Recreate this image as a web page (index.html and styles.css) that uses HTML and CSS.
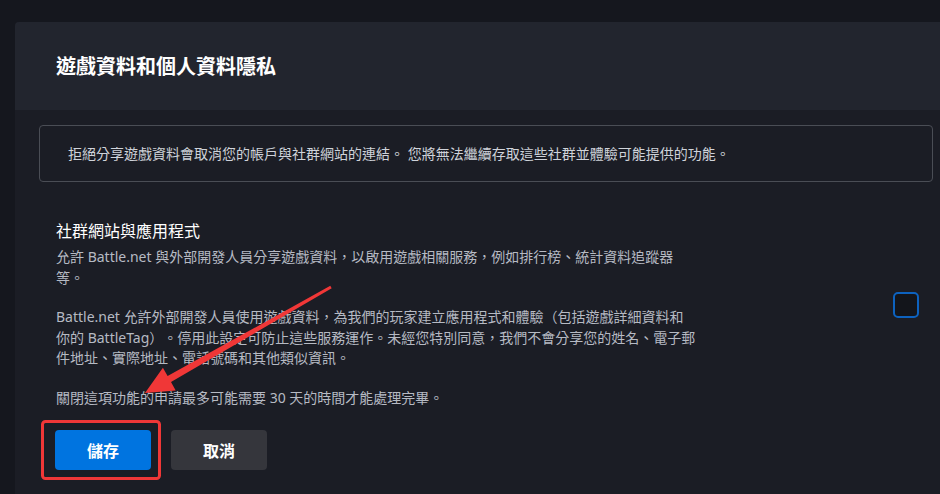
FILE: index.html
```html
<!DOCTYPE html>
<html lang="zh-Hant">
<head>
<meta charset="utf-8">
<title>遊戲資料和個人資料隱私</title>
<link rel="stylesheet" href="styles.css">
</head>
<body>
<div class="page">
  <section class="panel">
    <header class="panel-head">
      <h1 class="panel-title">遊戲資料和個人資料隱私</h1>
    </header>
    <div class="panel-body">
      <div class="notice">拒絕分享遊戲資料會取消您的帳戶與社群網站的連結。 您將無法繼續存取這些社群並體驗可能提供的功能。</div>
      <div class="setting">
        <div class="setting-text">
          <h2 class="setting-title">社群網站與應用程式</h2>
          <p class="para">允許 Battle.net 與外部開發人員分享遊戲資料，以啟用遊戲相關服務，例如排行榜、統計資料追蹤器等。</p>
          <p class="para">Battle.net 允許外部開發人員使用遊戲資料，為我們的玩家建立應用程式和體驗（包括遊戲詳細資料和你的 BattleTag）。停用此設定可防止這些服務運作。未經您特別同意，我們不會分享您的姓名、電子郵件地址、實際地址、電話號碼和其他類似資訊。</p>
          <p class="para">關閉這項功能的申請最多可能需要 30 天的時間才能處理完畢。</p>
        </div>
        <label class="check"><input type="checkbox" class="check-input"><span class="check-box"></span></label>
      </div>
      <div class="actions">
        <button class="btn btn-primary">儲存</button>
        <button class="btn btn-secondary">取消</button>
      </div>
    </div>
  </section>
  <svg class="annotation" width="940" height="494" viewBox="0 0 940 494">
    <polygon points="330.3,285.8 167.6,376.1 162.9,367.8 145,393 175.7,390.4 171,382.1 331.7,288.2" fill="#f03737"/>
    <rect x="42.5" y="421.5" width="117" height="57" rx="3" fill="none" stroke="#f03737" stroke-width="3"/>
  </svg>
</div>
</body>
</html>
```

FILE: styles.css
```css
* { box-sizing: border-box; }
html, body { margin: 0; padding: 0; }
body {
  background: #15171e;
  font-family: "Noto Sans", "Noto Sans CJK TC", sans-serif;
  color: #c9ccd3;
  overflow: hidden;
  width: 940px;
  height: 494px;
  text-spacing-trim: space-all;
}
.page {
  position: relative;
  padding: 22px 0 0 15px;
  height: 494px;
}
.panel {
  background: #1b1d25;
  border-radius: 4px 0 0 0;
  height: 100%;
}
.panel-head {
  background: #22252e;
  height: 88px;
  display: flex;
  align-items: center;
  padding-left: 41px;
  border-radius: 4px 0 0 0;
}
.panel-title {
  margin: 0;
  font-size: 20px;
  font-weight: 700;
  color: #ffffff;
  padding-bottom: 1px;
}
.panel-body {
  padding: 15px 7px 0 24px;
}
.notice {
  border: 1px solid #4a4d55;
  border-radius: 4px;
  height: 57px;
  display: flex;
  align-items: center;
  padding: 0 28px 1px;
  font-size: 14px;
  color: #cfd3da;
}
.setting {
  display: flex;
  align-items: center;
  justify-content: space-between;
  padding: 37px 14px 0 17px;
}
.setting-text {
  width: 640px;
}
.setting-title {
  margin: 0 0 4px;
  font-size: 16px;
  font-weight: 400;
  color: #ffffff;
  line-height: 24px;
}
.para {
  margin: 0 0 19px;
  font-size: 14px;
  line-height: 20.5px;
  color: #b6bac3;
}
.para:last-child { margin-bottom: 0; }
.check {
  display: block;
  margin-top: -18px;
}
.check-input { display: none; }
.check-box {
  display: block;
  width: 26px;
  height: 26px;
  border: 2px solid #0d62bf;
  border-radius: 5px;
  background: #13151b;
}
.actions {
  display: flex;
  gap: 20px;
  padding: 22px 0 0 16px;
}
.btn {
  width: 96px;
  height: 40px;
  border: 0;
  border-radius: 4px;
  font-family: "Noto Sans", "Noto Sans CJK TC", sans-serif;
  font-size: 16px;
  font-weight: 700;
  color: #ffffff;
  cursor: pointer;
}
.btn-primary { background: #0074e0; }
.btn-secondary { background: #35363c; }
.annotation {
  position: absolute;
  left: 0;
  top: 0;
  pointer-events: none;
}
```
